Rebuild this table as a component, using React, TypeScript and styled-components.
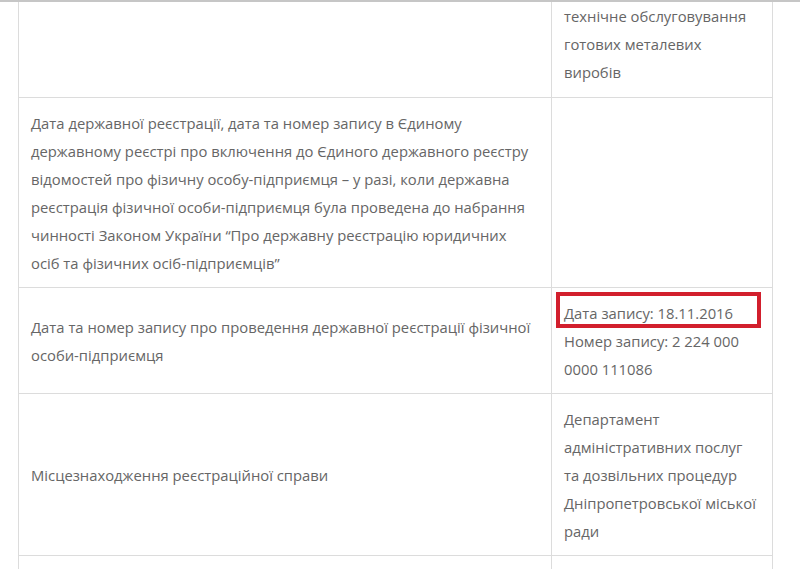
import React from "react";
import styled, { createGlobalStyle } from "styled-components";

const Global = createGlobalStyle`
  html, body { margin: 0; padding: 0; background: #fff; }
  body { font-family: "Open Sans", "Noto Sans", sans-serif; }
`;

const Page = styled.div`
  width: 800px;
  height: 569px;
  overflow: hidden;
  border-top: 2px solid #c6c6c6;
  box-sizing: border-box;
  padding-left: 18px;
`;

const Table = styled.table`
  border-collapse: collapse;
  width: 754px;
  table-layout: fixed;
  color: #666666;
  font-size: 14.8px;
  line-height: 28px;
`;

const Row = styled.tr`
  border-bottom: 1px solid #dcdcdc;
`;

const Cell = styled.td<{ $cut?: boolean }>`
  border-left: 1px solid #dcdcdc;
  border-right: 1px solid #dcdcdc;
  padding: ${(p) => (p.$cut ? "0 12px 11px" : "11px 12px 10px")};
  vertical-align: middle;
  white-space: nowrap;
`;

const LabelCol = styled.col`
  width: 533px;
`;
const ValueCol = styled.col`
  width: 221px;
`;

const Highlight = styled.span`
  display: block;
  position: relative;
  &::after {
    content: "";
    position: absolute;
    top: -7px;
    bottom: -1px;
    left: -8px;
    right: -1px;
    border: 4px solid #d21f2d;
  }
`;

const Line = styled.span`
  display: block;
`;

const lines = (arr: string[]) => arr.map((l, i) => <Line key={i}>{l}</Line>);

export default function App() {
  return (
    <>
      <Global />
      <Page>
        <Table>
          <colgroup>
            <LabelCol />
            <ValueCol />
          </colgroup>
          <tbody>
            <Row>
              <Cell $cut />
              <Cell $cut>
                {lines(["технічне обслуговування", "готових металевих", "виробів"])}
              </Cell>
            </Row>
            <Row>
              <Cell>
                {lines([
                  "Дата державної реєстрації, дата та номер запису в Єдиному",
                  "державному реєстрі про включення до Єдиного державного реєстру",
                  "відомостей про фізичну особу-підприємця – у разі, коли державна",
                  "реєстрація фізичної особи-підприємця була проведена до набрання",
                  "чинності Законом України “Про державну реєстрацію юридичних",
                  "осіб та фізичних осіб-підприємців”",
                ])}
              </Cell>
              <Cell />
            </Row>
            <Row>
              <Cell>
                {lines([
                  "Дата та номер запису про проведення державної реєстрації фізичної",
                  "особи-підприємця",
                ])}
              </Cell>
              <Cell>
                <Highlight>Дата запису: 18.11.2016</Highlight>
                {lines(["Номер запису: 2 224 000", "0000 111086"])}
              </Cell>
            </Row>
            <Row>
              <Cell>Місцезнаходження реєстраційної справи</Cell>
              <Cell>
                {lines([
                  "Департамент",
                  "адміністративних послуг",
                  "та дозвільних процедур",
                  "Дніпропетровської міської",
                  "ради",
                ])}
              </Cell>
            </Row>
            <Row>
              <Cell>&nbsp;</Cell>
              <Cell>&nbsp;</Cell>
            </Row>
          </tbody>
        </Table>
      </Page>
    </>
  );
}
